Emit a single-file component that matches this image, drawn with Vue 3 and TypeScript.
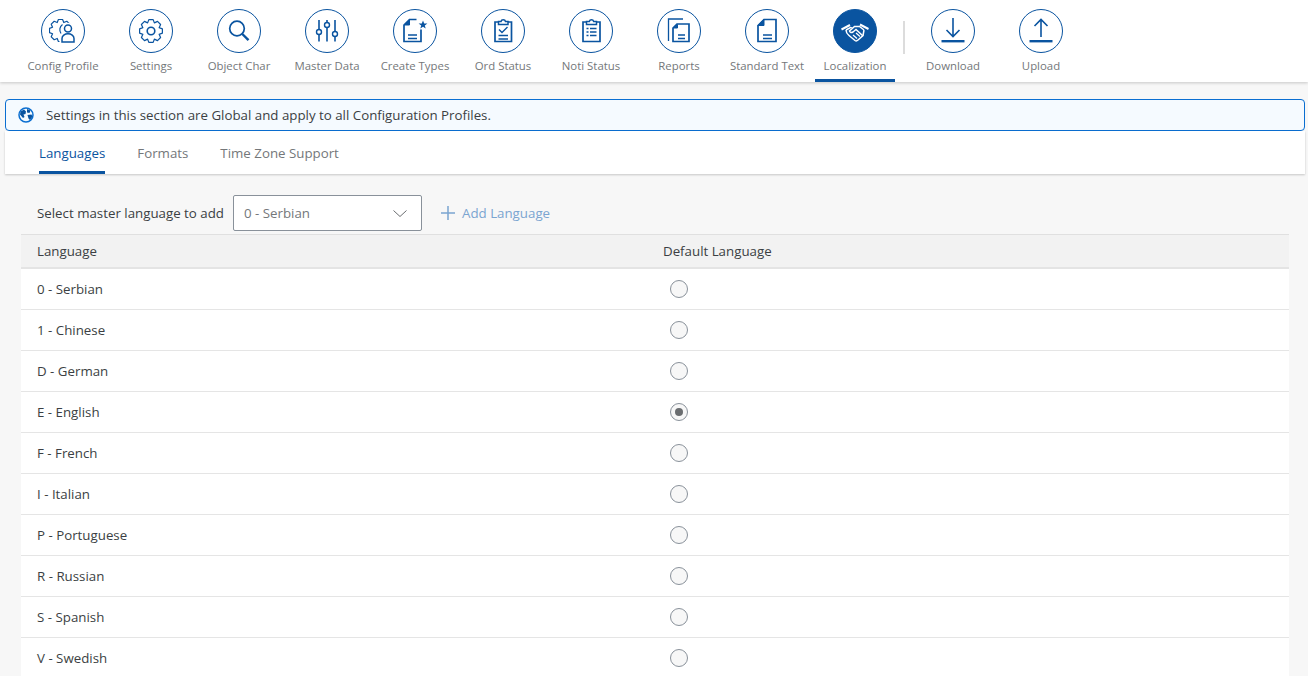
<script setup lang="ts">
interface NavItem { label: string; icon: string; active?: boolean; sep?: boolean }
const items: NavItem[] = [
  { label: 'Config Profile', icon: 'profile' },
  { label: 'Settings', icon: 'gear' },
  { label: 'Object Char', icon: 'search' },
  { label: 'Master Data', icon: 'sliders' },
  { label: 'Create Types', icon: 'create' },
  { label: 'Ord Status', icon: 'ord' },
  { label: 'Noti Status', icon: 'noti' },
  { label: 'Reports', icon: 'reports' },
  { label: 'Standard Text', icon: 'doc' },
  { label: 'Localization', icon: 'hands', active: true, sep: true },
  { label: 'Download', icon: 'down' },
  { label: 'Upload', icon: 'up' },
]
const langs = ['0 - Serbian','1 - Chinese','D - German','E - English','F - French','I - Italian','P - Portuguese','R - Russian','S - Spanish','V - Swedish']

function gear(cx: number, cy: number, outer: number, inner: number, teeth: number): string {
  const step = (Math.PI * 2) / teeth
  let d = ''
  for (let i = 0; i < teeth; i++) {
    const a = i * step - Math.PI / 2
    const pts: [number, number][] = [
      [inner, a - step * 0.5],
      [outer, a - step * 0.24],
      [outer, a + step * 0.24],
    ]
    for (const [r, t] of pts) {
      d += `${d ? 'L' : 'M'}${(cx + r * Math.cos(t)).toFixed(2)} ${(cy + r * Math.sin(t)).toFixed(2)}`
    }
  }
  return d + 'Z'
}
const gearBig = gear(14, 14, 11.6, 8.8, 8)
const gearProfile = gear(11.5, 13.5, 11.2, 8.6, 8)
</script>

<template>
  <div class="page">
    <nav class="nav">
      <template v-for="it in items" :key="it.label">
        <div class="nav-item" :class="{ active: it.active }">
          <div class="circle">
            <svg viewBox="0 0 28 28" width="28" height="28" fill="none" stroke="currentColor" stroke-width="1.3">
              <template v-if="it.icon === 'profile'">
                <path :d="gearProfile" stroke-linejoin="round" stroke-width="1.2"/>
                <path d="M12.500 24.500v-3c0-3 2.800-5 6.500-5s6.500 2 6.500 5v3z" fill="#fff" stroke="#fff" stroke-width="4"/>
                <circle cx="19" cy="11.500" r="4.500" fill="#fff" stroke="#fff" stroke-width="2.500"/>
                <circle cx="19" cy="11.500" r="3.500" stroke-width="1.500"/>
                <path d="M13 25v-3.500c0-2.700 2.700-4.700 6-4.700s6 2 6 4.700V25z" stroke-width="1.500"/>
                <path d="M13.500 7.500a6.500 6.500 0 0 0-1.500 9" stroke-width="1.200"/>
              </template>
              <template v-else-if="it.icon === 'gear'">
                <path :d="gearBig" stroke-linejoin="round" stroke-width="1.200"/>
                <circle cx="14" cy="14" r="3.800" stroke-width="1.600"/>
              </template>
              <template v-else-if="it.icon === 'search'">
                <circle cx="12" cy="11.500" r="7.300" stroke-width="1.700"/>
                <path d="M17.300 17 23.500 23.200" stroke-width="2.400"/>
              </template>
              <template v-else-if="it.icon === 'sliders'">
                <path d="M6 3v9.500M6 17.500V24.500M14 3v2.500M14 10.500V24.500M22 3v11.500M22 19.500V24.500" stroke-width="1.600"/>
                <circle cx="6" cy="15" r="2.500" stroke-width="1.400"/>
                <circle cx="14" cy="8" r="2.500" stroke-width="1.400"/>
                <circle cx="22" cy="17" r="2.500" stroke-width="1.400"/>
              </template>
              <template v-else-if="it.icon === 'create'">
                <path d="M15.500 2.500H8.500L3 8v16.500h17V12.500" stroke-width="1.700"/>
                <path d="M8.500 2.500V8H3z" fill="currentColor" stroke-width="1"/>
                <path d="M7 18h9M7 21.500h9" stroke-width="1.700"/>
                <path d="m22 3.500 1.200 3h3.200l-2.600 2 .9 3.100-2.700-1.800-2.700 1.800.9-3.100-2.600-2h3.200z" fill="currentColor" stroke="none"/>
              </template>
              <template v-else-if="it.icon === 'ord'">
                <path d="M9.500 5H6v19.500h16.500V5H19" stroke-width="1.700"/>
                <path d="M9.500 7.500V4.500h2.500a2.300 2.300 0 0 1 4.500 0H19v3z" stroke-width="1.500"/>
                <path d="m10 12.500 3 3 5.500-5.500" stroke-width="1.400"/>
                <path d="M9.500 18.500h9.500M9.500 22h9.500" stroke-width="1.700"/>
              </template>
              <template v-else-if="it.icon === 'noti'">
                <path d="M9.500 5H6v19.500h17V5h-3.500" stroke-width="1.700"/>
                <path d="M9.500 7.500V4.500h2.800a2.300 2.300 0 0 1 4.400 0h2.800v3z" stroke-width="1.500"/>
                <path d="M9.500 11.500h2M13 11.500h6.500M9.500 15h2M13 15h6.500M9.500 18.500h2M13 18.500h6.500" stroke-width="1.500"/>
              </template>
              <template v-else-if="it.icon === 'reports'">
                <path d="M18 2H3.500v22" stroke-width="1.300"/>
                <path d="M13 7H12L8 11v13.500h16V7z" stroke-width="1.700"/>
                <path d="M12.500 7.500V11H8.500z" fill="currentColor" stroke-width="1"/>
                <path d="M13 18h7M13 21.500h7" stroke-width="1.700"/>
              </template>
              <template v-else-if="it.icon === 'doc'">
                <path d="M11 2.500h12v22H5V8.500z" stroke-width="1.700"/>
                <path d="M11 2.500v6H5z" fill="currentColor" stroke-width="1"/>
                <path d="M10 18h9M10 21.500h9" stroke-width="1.700"/>
              </template>
              <template v-else-if="it.icon === 'hands'">
                <path d="M.5 12.500 9 8M27.500 12 19 7.500" stroke-width="2"/>
                <path d="M5 13 9.500 10.500 12 11.500M23 13l-4.500-3.500h-5L8.500 14q1 2.500 3.500 1l3-2.500 7 6.500" stroke-width="1.500"/>
                <path d="M5 13q0 3 3 5.500l6 5q1.500 1 3-.5l5-4.500 1-5.500" stroke-width="1.500"/>
                <path d="m12 18 4 3.500M15 16l4 3.500" stroke-width="1.300"/>
              </template>
              <template v-else-if="it.icon === 'down'">
                <path d="M14 1v18M7.500 13l6.500 6.500 6.500-6.500" stroke-width="1.600"/>
                <path d="M2.500 24.200h23" stroke-width="2.400"/>
              </template>
              <template v-else-if="it.icon === 'up'">
                <path d="M14 20V2.500M7.500 9l6.500-6.500L20.500 9" stroke-width="1.600"/>
                <path d="M2.500 24.200h23" stroke-width="2.400"/>
              </template>
            </svg>
          </div>
          <div class="nav-label">{{ it.label }}</div>
        </div>
        <div v-if="it.sep" class="nav-sep"></div>
      </template>
    </nav>

    <div class="strip">
      <svg class="globe" viewBox="0 0 16 16" width="16" height="16">
        <circle cx="8" cy="8" r="7" fill="none" stroke="#0a6ed1" stroke-width="1.500"/>
        <path d="M2.500 4.500 6 2.500l2 2-.5 2.500-2 .5 1 2.500-1.500 1L2 7.500zM9 2l3.500 1.500-1 2.500-2.500-.5zM9.500 8l4-.5 1 2-2.500 3.500-1.500-1.500z" fill="#0a54a0"/>
      </svg>
      <span>Settings in this section are Global and apply to all Configuration Profiles.</span>
    </div>

    <div class="tabs">
      <div class="tab active">Languages</div>
      <div class="tab">Formats</div>
      <div class="tab">Time Zone Support</div>
    </div>

    <main class="content">
      <div class="toolbar">
        <span class="tool-label">Select master language to add</span>
        <div class="select">
          <span>0 - Serbian</span>
          <svg viewBox="0 0 14 7" width="14" height="7" fill="none" stroke="#6a6d70" stroke-width="1"><path d="m.5.500 6.500 6 6.500-6"/></svg>
        </div>
        <div class="add">
          <svg viewBox="0 0 14 14" width="14" height="14" fill="none" stroke="#7ba5d1" stroke-width="1.500"><path d="M7 0v14M0 7h14"/></svg>
          <span>Add Language</span>
        </div>
      </div>

      <div class="row head">
        <div class="col-a">Language</div>
        <div class="col-b">Default Language</div>
      </div>
      <div v-for="l in langs" :key="l" class="row">
        <div class="col-a">{{ l }}</div>
        <div class="col-b">
          <span class="radio" :class="{ on: l === 'E - English' }"></span>
        </div>
      </div>
    </main>
  </div>
</template>

<style scoped>
.page {
  height: 676px;
  overflow: hidden;
  background: #f7f7f7;
  font-family: "Open Sans", "Noto Sans", sans-serif;
  color: #3b3f43;
}
.nav {
  display: flex;
  height: 82px;
  padding-left: 19px;
  background: #fff;
  box-shadow: 0 1px 3px rgba(0,0,0,.2);
  position: relative;
}
.nav-item {
  width: 88px;
  display: flex;
  flex-direction: column;
  align-items: center;
  padding-top: 9px;
  box-sizing: border-box;
}
.nav-item.active { box-shadow: inset 0 -3px 0 #0a54a0; width: 80px; margin: 0 4px; }
.circle {
  width: 44px;
  height: 44px;
  border: 1px solid #0a54a0;
  border-radius: 50%;
  box-sizing: border-box;
  display: flex;
  align-items: center;
  justify-content: center;
  color: #0a54a0;
}
.active .circle { background: #0a54a0; color: #fff; }
.nav-label {
  margin-top: 5px;
  font-size: 11.400px;
  line-height: 15px;
  color: #74777a;
  white-space: nowrap;
}
.nav-sep {
  width: 2px;
  height: 33px;
  margin: 21px 4px 0;
  background: #dcdcdc;
}
.strip {
  margin: 17px 3px 0 5px;
  height: 32px;
  border: 1px solid #0a6ed1;
  border-radius: 4px;
  background: #f5faff;
  box-sizing: border-box;
  display: flex;
  align-items: center;
  padding-left: 12px;
  gap: 12px;
  font-size: 13.300px;
}
.tabs {
  margin: 0 3px 0 5px;
  height: 43px;
  display: flex;
  gap: 32px;
  padding-left: 34px;
  background: #fff;
  box-shadow: 0 1px 2px rgba(0,0,0,.2);
  font-size: 13.300px;
}
.tab {
  line-height: 44px;
  color: #74777a;
  height: 43px;
  box-sizing: border-box;
}
.tab.active { color: #0a54a0; border-bottom: 3px solid #0a54a0; }
.content { padding: 21px 19px 0 21px; }
.toolbar {
  display: flex;
  align-items: center;
  height: 36px;
  padding-left: 16px;
  margin-bottom: 3px;
  font-size: 13.300px;
}
.tool-label { width: 196px; white-space: nowrap; }
.select {
  width: 189px;
  height: 36px;
  box-sizing: border-box;
  border: 1px solid #89919a;
  border-radius: 2px;
  background: #fff;
  display: flex;
  align-items: center;
  justify-content: space-between;
  padding: 0 14px 0 10px;
  color: #74777a;
}
.add {
  display: flex;
  align-items: center;
  gap: 7px;
  margin-left: 19px;
  color: #7ba5d1;
}
.row {
  display: flex;
  align-items: center;
  height: 41px;
  background: #fff;
  border-bottom: 1px solid #e5e5e5;
  box-sizing: border-box;
  font-size: 13.300px;
}
.row.head {
  height: 35px;
  background: #f2f2f2;
  border-top: 1px solid #e0e0e0;
  border-bottom: 2px solid #e4e4e4;
}
.col-a { width: 642px; padding-left: 16px; box-sizing: border-box; }
.col-b { flex: 1; display: flex; align-items: center; }
.radio {
  width: 18px;
  height: 18px;
  margin-left: 7px;
  border: 1px solid #89919a;
  border-radius: 50%;
  background: #f7f7f7;
  box-sizing: border-box;
  display: flex;
  align-items: center;
  justify-content: center;
}
.radio.on::after {
  content: "";
  width: 8px;
  height: 8px;
  border-radius: 50%;
  background: #6a6d70;
}
</style>
